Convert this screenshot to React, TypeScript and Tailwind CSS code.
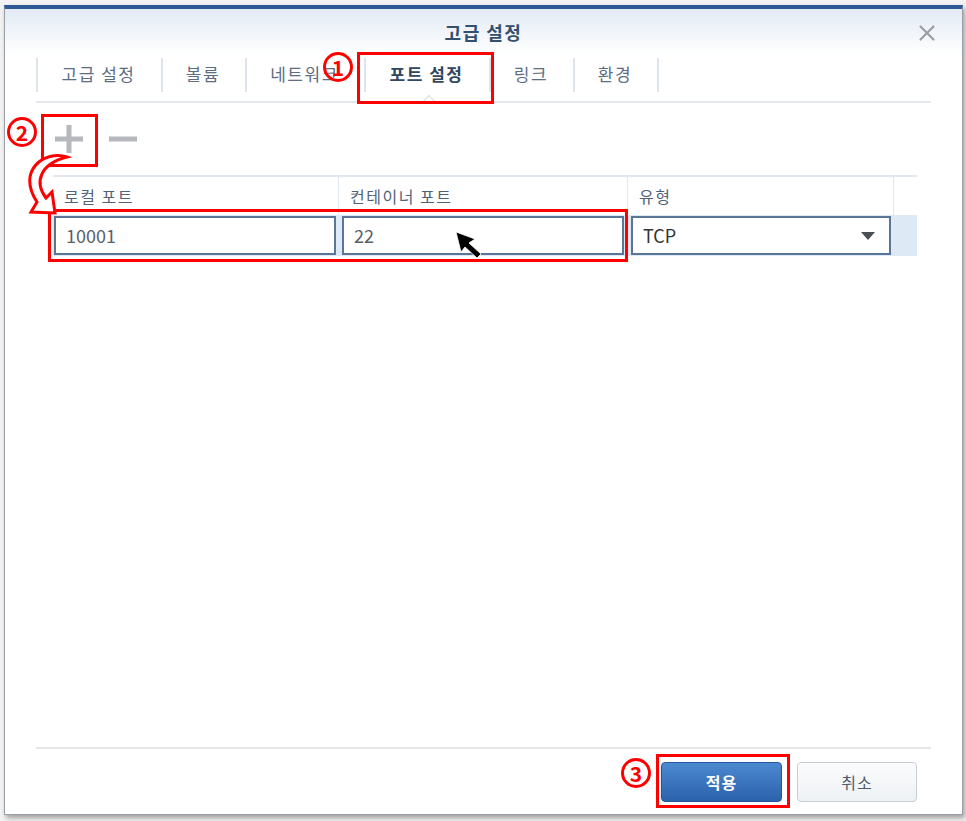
import { X } from "lucide-react";

const tabs = [
  { label: "고급 설정", w: "w-[125px]" },
  { label: "볼륨", w: "w-[84px]" },
  { label: "네트워크", w: "w-[119px]" },
  { label: "포트 설정", w: "w-[125px]", active: true },
  { label: "링크", w: "w-[84px]" },
  { label: "환경", w: "w-[84px]" },
];

const font = { fontFamily: '"Noto Sans CJK KR", "Noto Sans", sans-serif' };

function Badge({ n, className }: { n: string; className: string }) {
  return (
    <div
      className={`absolute flex h-[30px] w-[30px] items-center justify-center rounded-full border-[3px] border-[#ff0000] text-[21px] font-bold leading-none text-[#ff0000] ${className}`}
    >
      {n}
    </div>
  );
}

export default function App() {
  return (
    <div className="relative h-[821px] w-[966px] overflow-hidden bg-[#f3f3f3]" style={font}>
      <div className="pl-[4px] pt-[5px]">
        <div className="flex h-[810px] w-[959px] flex-col border-l border-r border-b border-[#9aa0a6] border-t-[4px] border-t-[#2e5b95] bg-white shadow-[2px_3px_5px_rgba(0,0,0,0.35)]">
          {/* header */}
          <div className="relative flex h-[46px] items-center justify-center bg-gradient-to-b from-[#e3eaf4] to-white">
            <span className="text-[18px] font-bold tracking-[1.5px] text-[#34506f]">고급 설정</span>
            <X className="absolute right-[22px] top-[11px] h-[26px] w-[26px] text-[#9a9ea3]" strokeWidth={2} />
          </div>

          {/* tabs */}
          <div className="mx-[31px] flex h-[48px] border-b-2 border-[#e4e7eb]">
            {tabs.map((t) => (
              <div key={t.label} className={`relative flex h-[46px] items-center justify-center ${t.w}`}>
                <div className="absolute left-0 top-[3px] h-[34px] w-[2px] bg-[#dde4ec]" />
                <span
                  className={`-mt-[8px] text-[17px] tracking-[1.5px] ${
                    t.active ? "font-bold text-[#31465f]" : "text-[#5d6d82]"
                  }`}
                >
                  {t.label}
                </span>
                {t.active && (
                  <div className="absolute bottom-[0px] left-[60px] h-[10px] w-[10px] translate-y-[6px] rotate-45 border-l border-t border-[#d5d9de] bg-white" />
                )}
              </div>
            ))}
            <div className="relative h-[46px] w-[2px]">
              <div className="absolute left-0 top-[3px] h-[34px] w-[2px] bg-[#dde4ec]" />
            </div>
          </div>

          <div className="mx-[31px] flex flex-1 flex-col">
            {/* toolbar */}
            <div className="flex h-[72px] items-center gap-[26px] pl-[19px]">
              <svg width="28" height="28" viewBox="0 0 28 28">
                <rect x="11.5" y="0" width="5" height="28" fill="#b5b8bc" />
                <rect x="0" y="11.5" width="28" height="5" fill="#b5b8bc" />
              </svg>
              <svg width="28" height="28" viewBox="0 0 28 28">
                <rect x="0" y="11.5" width="28" height="5" fill="#b5b8bc" />
              </svg>
            </div>

            {/* table */}
            <div className="ml-[17px] mr-[14px]">
              <div className="flex h-[40px] border-t-2 border-[#e2e8ef] text-[16px] tracking-[1.5px] text-[#50627a]">
                <div className="flex w-[286px] items-center border-r border-[#e3e9f0] pl-[11px]">로컬 포트</div>
                <div className="flex w-[289px] items-center border-r border-[#e3e9f0] pl-[11px]">컨테이너 포트</div>
                <div className="flex w-[266px] items-center border-r border-[#e3e9f0] pl-[11px]">유형</div>
                <div className="flex-1" />
              </div>
              <div className="flex h-[41px] items-center gap-[6px] bg-[#dee9f6] pl-[1px]">
                <div className="flex h-[39px] w-[282px] items-center border-2 border-[#5b7599] bg-white pl-[10px] text-[18px] text-[#5a6068]">
                  10001
                </div>
                <div className="flex h-[39px] w-[282px] items-center border-2 border-[#5b7599] bg-white pl-[10px] text-[18px] text-[#5a6068]">
                  22
                </div>
                <div className="ml-[1px] flex h-[39px] w-[260px] items-center justify-between border-2 border-[#5b7599] bg-white pl-[10px] pr-[14px] text-[18px] text-[#333]">
                  <span>TCP</span>
                  <svg width="14" height="8" viewBox="0 0 14 8">
                    <path d="M0 0 L14 0 L7 8 Z" fill="#4a4f55" />
                  </svg>
                </div>
              </div>
            </div>
          </div>

          {/* footer */}
          <div className="mx-[31px] flex justify-end gap-[15px] border-t-2 border-[#e6e6e6] pb-[12px] pr-[14px] pt-[13px]">
            <button className="h-[40px] w-[121px] rounded-[4px] border border-[#23589c] bg-gradient-to-b from-[#4b89d0] to-[#2b62ab] text-[16px] font-bold tracking-[1px] text-white">
              적용
            </button>
            <button className="h-[40px] w-[120px] rounded-[4px] border border-[#c8ced6] bg-gradient-to-b from-[#fbfcfd] to-[#eef1f4] text-[16px] tracking-[1px] text-[#4f5b69]">
              취소
            </button>
          </div>
        </div>
      </div>

      {/* annotations */}
      <div className="absolute left-[357px] top-[52px] h-[52px] w-[137px] border-[3px] border-[#ff0000]" />
      <div className="absolute left-[41px] top-[114px] h-[53px] w-[57px] border-[3px] border-[#ff0000]" />
      <div className="absolute left-[48px] top-[209px] h-[53px] w-[580px] border-[3px] border-[#ff0000]" />
      <div className="absolute left-[656px] top-[754px] h-[54px] w-[134px] border-[3px] border-[#ff0000]" />
      <Badge n="1" className="left-[323px] top-[52px]" />
      <Badge n="2" className="left-[7px] top-[117px]" />
      <Badge n="3" className="left-[621px] top-[758px]" />

      <svg className="pointer-events-none absolute left-0 top-0" width="966" height="821" viewBox="0 0 966 821">
        <path
          d="M67 157 C45 150 16 170 37 202 L31 212 L55 213 L52 192 L46 198 C34 182 40 164 67 157 Z"
          fill="#ffffff"
          stroke="#ff0000"
          strokeWidth="3"
          strokeLinejoin="miter"
        />
        <path
          d="M456 232 L475 239 L469 243 L481 254 L477 258 L465 247 L461 252 Z"
          fill="#000000"
          stroke="#ffffff"
          strokeWidth="0.8"
        />
      </svg>
    </div>
  );
}
